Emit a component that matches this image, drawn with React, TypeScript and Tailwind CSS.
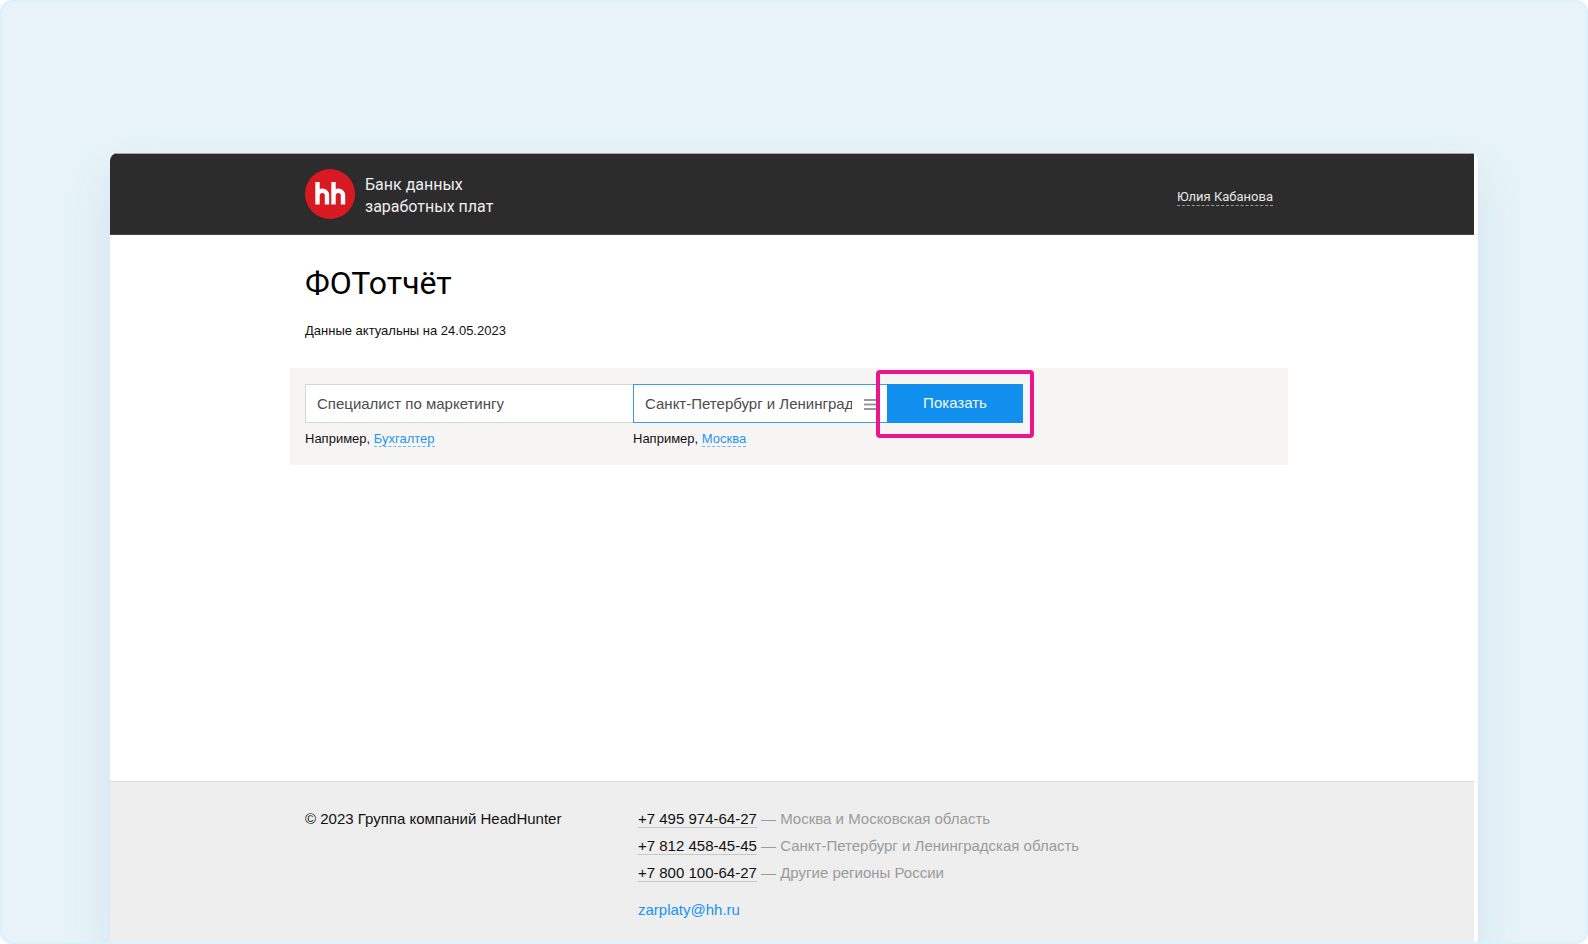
import { useState } from "react";

const PHONES = [
  { number: "+7 495 974-64-27", href: "tel:+74959746427", region: "Москва и Московская область" },
  { number: "+7 812 458-45-45", href: "tel:+78124584545", region: "Санкт-Петербург и Ленинградская область" },
  { number: "+7 800 100-64-27", href: "tel:+78001006427", region: "Другие регионы России" },
];

const containerClass = "mx-auto w-full max-w-[998px] px-[15px]";
const inputClass = "block h-[39px] w-full border bg-white pl-[11px] text-[15px] text-[#4c4c4c] outline-none";
const hintLinkClass = "border-b border-dashed border-[#6bb8f5] leading-[14px] text-[#1e96f5]";

function Logo() {
  return (
    <div className="flex size-[50px] items-center justify-center rounded-full bg-[#d91921]">
      <svg viewBox="0 0 31 24" className="h-6 w-[31px]" fill="none" stroke="#fff" strokeWidth="4.4">
        <path d="M2.500 0V22.500M2.500 14C2.500 7 12 7 12 13.500V22.500" />
        <path d="M18.500 0V22.500M18.500 14C18.500 7 28 7 28 13.500V22.500" />
      </svg>
    </div>
  );
}

function Header() {
  return (
    <header className="border-y border-t-[#a9a9a9] border-b-[#454345] bg-[#2c2c2c] pr-[6px]">
      <div className={`${containerClass} flex h-20 items-center justify-between`}>
        <a href="#" className="flex items-center gap-[10px]">
          <Logo />
          <span className="pt-1 font-[Roboto] text-[16px] leading-[22px] text-[#eeeeee]">
            Банк данных
            <br />
            заработных плат
          </span>
        </a>
        <button
          type="button"
          className="mt-[6px] border-b border-dashed border-[#9a9a9a] font-[Roboto] text-[13px] leading-4 text-[#e6e6e6]"
        >
          Юлия Кабанова
        </button>
      </div>
    </header>
  );
}

function SearchForm() {
  const [profession, setProfession] = useState("Специалист по маркетингу");
  const [region, setRegion] = useState("Санкт-Петербург и Ленинградская область");

  return (
    <form
      className="mx-auto mt-[27px] flex w-full max-w-[998px] bg-[#f7f5f4] px-[15px] pt-4 pb-[17px]"
      onSubmit={(e) => e.preventDefault()}
    >
      <div className="w-[328px]">
        <input
          aria-label="Профессия"
          className={`${inputClass} border-r-0 border-[#d0d8da] pr-3`}
          value={profession}
          onChange={(e) => setProfession(e.target.value)}
        />
        <p className="mt-[7px] text-[13px] leading-[18px]">
          Например,{" "}
          <button type="button" className={hintLinkClass} onClick={() => setProfession("Бухгалтер")}>
            Бухгалтер
          </button>
        </p>
      </div>
      <div className="w-[254px]">
        <div className="relative">
          <input
            aria-label="Регион"
            className={`${inputClass} border-r-0 border-[#3d9ce8] pr-[35px]`}
            value={region}
            onChange={(e) => setRegion(e.target.value)}
          />
          <button type="button" aria-label="Выбрать регион" className="absolute top-[15px] right-[9px]">
            <svg viewBox="0 0 14 11" className="h-[11px] w-[14px]" stroke="#999" strokeWidth="2">
              <path d="M0 1H14M0 5.500H14M0 10H14" />
            </svg>
          </button>
        </div>
        <p className="mt-[7px] text-[13px] leading-[18px]">
          Например,{" "}
          <button type="button" className={hintLinkClass} onClick={() => setRegion("Москва")}>
            Москва
          </button>
        </p>
      </div>
      <div className="relative h-[39px] w-[136px]">
        <button type="submit" className="size-full bg-[#118fee] text-[15px] text-[#f2f8fd]">
          Показать
        </button>
        <div className="pointer-events-none absolute -inset-x-[11px] -top-[14px] -bottom-[15px] rounded-[4px] border-4 border-[#ec168c]" />
      </div>
    </form>
  );
}

function Footer() {
  return (
    <footer className="border-t border-[#dcdcdc] bg-[#eeeeee] pr-[6px] text-[15px]">
      <div className={`${containerClass} flex pt-[23px] pb-[19px] leading-[27px]`}>
        <p className="w-[333px]">© 2023 Группа компаний HeadHunter</p>
        <div>
          <ul>
            {PHONES.map((phone) => (
              <li key={phone.number} className="text-[#9b9b9b]">
                <a href={phone.href} className="border-b border-[#c8c8c8] text-[#111111]">
                  {phone.number}
                </a>{" "}
                — {phone.region}
              </li>
            ))}
          </ul>
          <a href="mailto:zarplaty@hh.ru" className="mt-[10px] block text-[#1794f5]">
            zarplaty@hh.ru
          </a>
        </div>
      </div>
    </footer>
  );
}

export default function App() {
  return (
    <div className="flex min-h-screen flex-col overflow-hidden rounded-xl border-2 border-[#daf3fa] bg-[#e7f3f8] font-['Liberation_Sans',Arial,sans-serif] text-[#111111]">
      <div className="mx-[108px] mt-[151px] flex flex-1 flex-col overflow-hidden rounded-t-lg bg-[#fdfdfd] pr-1 shadow-[0_24px_48px_#cfe2ef]">
        <Header />
        <main className="flex-1 bg-white pr-[6px]">
          <div className={containerClass}>
            <h1 className="pt-7 font-[Roboto] text-[32px] leading-10 text-black">ФОТотчёт</h1>
            <p className="mt-[18px] text-[13px] leading-5">Данные актуальны на 24.05.2023</p>
          </div>
          <SearchForm />
        </main>
        <Footer />
      </div>
    </div>
  );
}
